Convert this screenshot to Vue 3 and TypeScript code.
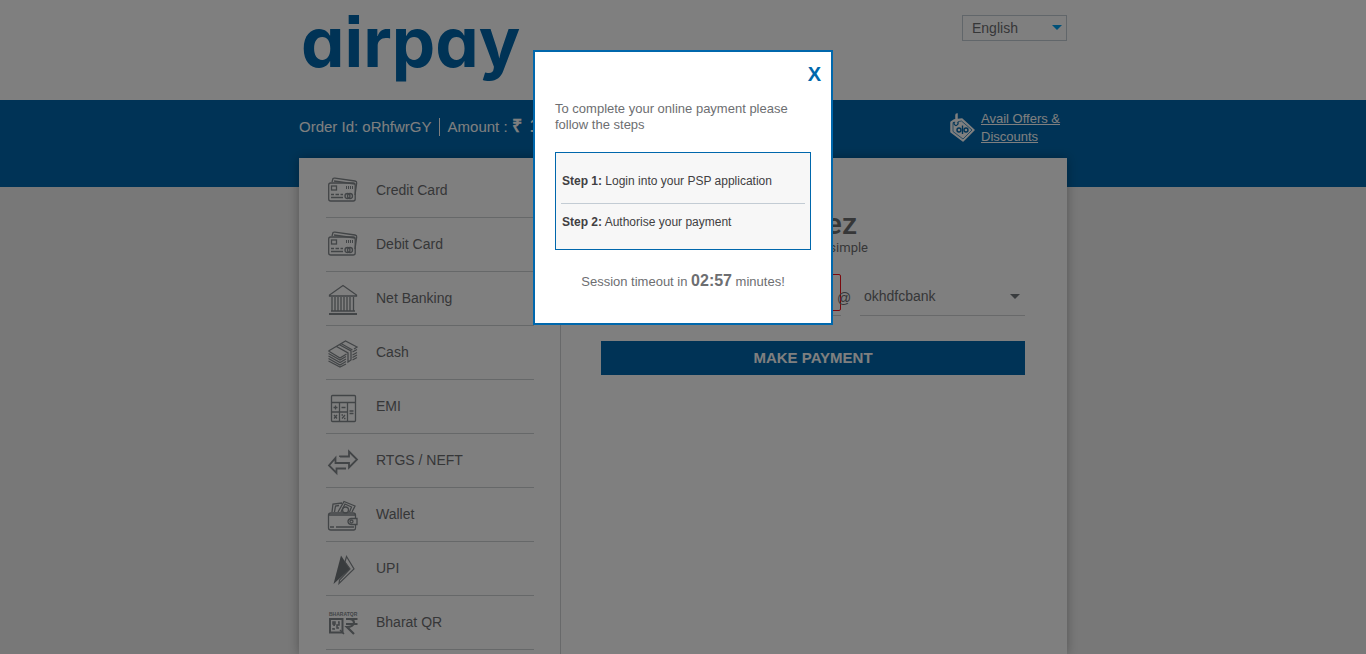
<script setup lang="ts">
import { ref } from 'vue'

interface Method {
  id: string
  label: string
}

const methods: Method[] = [
  { id: 'card', label: 'Credit Card' },
  { id: 'card', label: 'Debit Card' },
  { id: 'bank', label: 'Net Banking' },
  { id: 'cash', label: 'Cash' },
  { id: 'emi', label: 'EMI' },
  { id: 'transfer', label: 'RTGS / NEFT' },
  { id: 'wallet', label: 'Wallet' },
  { id: 'upi', label: 'UPI' },
  { id: 'qr', label: 'Bharat QR' },
]

const language = ref('English')
const handle = ref('okhdfcbank')
const vpa = ref('')
const modalOpen = ref(true)
</script>

<template>
  <div class="page">
    <header class="top wrap">
      <div class="logo">airpay</div>
      <div class="language">
        <select v-model="language" aria-label="Language">
          <option>English</option>
          <option>Hindi</option>
        </select>
        <svg class="caret" viewBox="0 0 10 5"><path d="M0 0H10L5 5Z" fill="#00a0f0" /></svg>
      </div>
    </header>

    <div class="band">
      <div class="order wrap">
        <span class="order-id">Order Id: oRhfwrGY</span>
        <span class="amount">Amount : <b class="rupee">₹</b><b>1.00</b></span>
        <div class="offers">
          <svg viewBox="0 0 26 30" fill="none">
            <path d="M2 9L5 7L13 6L25 17L14 28L2 19Z" fill="#fff" stroke="#fff" stroke-width="1.500" stroke-linejoin="round" />
            <path d="M4 9.500L12.500 8L23 17L14 26L4 18.500Z" stroke="#0067ac" stroke-width=".7" />
            <path d="M5 9V11Q7 14 9 11V9" stroke="#0067ac" stroke-width="1.300" />
            <path d="M7 11V2Q7 1 8 1V9" stroke="#fff" stroke-width="1.500" />
            <circle cx="10" cy="17" r="2" stroke="#0067ac" stroke-width="1.400" />
            <circle cx="17" cy="17" r="2" stroke="#0067ac" stroke-width="1.400" />
            <path d="M13.500 12.500V21" stroke="#0067ac" stroke-width="1.400" />
          </svg>
          <a href="#">Avail Offers &amp; Discounts</a>
        </div>
      </div>
    </div>

    <main class="panel wrap">
      <nav class="methods">
        <ul>
          <li v-for="m in methods" :key="m.label">
            <a href="#">
              <svg v-if="m.id === 'card'" class="icon" viewBox="0 0 32 32">
                <path d="M5 7L6 3.500Q6.500 3 8 3.200L28 6Q30 6.500 29.700 8L28 20" />
                <path d="M7 6L28 9" />
                <rect x="1.700" y="8" width="26.500" height="18" rx="2" />
                <rect x="4.500" y="11" width="5" height="4" />
                <path d="M19.500 11V14M21.500 11V14M23.500 11V14M25.500 11V14" stroke-width="1" />
                <path d="M4 19.500H7M8.500 19.500H12M13.500 19.500H16M4 22.500H16" />
                <circle cx="20.500" cy="21" r="2.500" /><circle cx="23" cy="21" r="2.500" />
              </svg>
              <svg v-else-if="m.id === 'bank'" class="icon" viewBox="0 0 32 32">
                <path d="M2.500 13V12L16 2.500L29.500 12V13Z" />
                <path d="M5 14V28M8 14V28M11 14V28M14 14V28M17 14V28M20 14V28M23 14V28M26.500 14V28M4 28H28" />
                <path d="M2 31H30" stroke-width="2" />
              </svg>
              <svg v-else-if="m.id === 'cash'" class="icon" viewBox="0 0 32 32">
                <path d="M1.500 14L18.500 4L30 10L27 12M1.500 14L13 21L19.500 17M9.500 9.500L21 16V25L24 23V14L12 7.500M14 6.500L25.500 13" />
                <path d="M1.500 16.500L13 23L19 19.500M1.500 19L13 25.500L19 22M1.500 21.500L13 28L19 24.500M1.500 24L13 30L19 27M25.500 15L30 12.500M25.500 18L30 15.500M25.500 20.500L30 18M25.500 23L30 20.500" />
              </svg>
              <svg v-else-if="m.id === 'emi'" class="icon" viewBox="0 0 32 32">
                <rect x="4.500" y="4.500" width="24" height="26" rx="1" />
                <path d="M4.500 11.500H28.500M12.500 11.500V30.500M20.500 11.500V30.500M4.500 21H20.500M6.500 16.500H10.500M8.500 14.500V18.500M14.500 16.500H18.500M22.500 20H26.500M22.500 22.500H26.500M7 24L10 27.500M10 24L7 27.500M15 27.500L18 24M14.500 24H16M17 27.500H18.500" />
              </svg>
              <svg v-else-if="m.id === 'transfer'" class="icon" viewBox="0 0 32 32">
                <path d="M13 12V11.500H22V6.500L30 14.500L22 22.500V18H8.500V13L2 20.500L9.500 28V23.500H19" stroke-width="1.800" />
              </svg>
              <svg v-else-if="m.id === 'wallet'" class="icon" viewBox="0 0 32 32">
                <path d="M4 14Q1.500 14 1.500 16V29Q1.500 31 4 31H27Q28.500 31 28.500 29V25M28.500 19V16Q28.500 14 26 14H4M2 16H28M3 28H7M9 28H27" />
                <path d="M5 13L6 5L15 4M7.500 13L8.500 7L12 6.500M11 13L17 2.500L28 7L25 13M14 13L18 5L24.500 8L22.500 13" />
                <circle cx="18.500" cy="11" r="3" />
                <path d="M30 19.500H24Q21 20 21 22.500Q21 25 24 25.500H30Z" />
                <circle cx="24.500" cy="22.500" r="1.500" />
              </svg>
              <svg v-else-if="m.id === 'upi'" class="icon" viewBox="0 0 32 32">
                <path d="M14 2.500L23 16L6.500 31Z" fill="#73787c" stroke="none" />
                <path d="M18 9L19.500 3.500L27 16L12 30.500L12.500 27L23 16L18 9" stroke-width="1.200" />
              </svg>
              <svg v-else class="icon" viewBox="0 0 32 32">
                <text x="2" y="9" font-size="5" font-weight="bold" fill="#858a8e" stroke="none">BHARATQR</text>
                <path d="M3 12H15.500V25.500H3Z" stroke-width="2" />
                <path d="M6 15H8V17H6ZM11 15H12V18H10V21H12M6 21V22H8M13 23L17 27M8 18H7V19" stroke-width="1.500" />
                <path d="M19 12H30.500M19 17H30.500M19 12H22Q27 12 27 16Q26 20 20 20L27 27" stroke-width="2.200" />
              </svg>
              <span>{{ m.label }}</span>
            </a>
          </li>
        </ul>
      </nav>

      <section class="pay">
        <div class="brand">
          <div class="brand-name">Tez</div>
          <div class="brand-line">Money made simple</div>
        </div>
        <form @submit.prevent>
          <div class="fields">
            <div class="vpa"><input v-model="vpa" type="text" aria-label="Payment address" /></div>
            <span class="at">@</span>
            <div class="handle">
              <select v-model="handle" aria-label="Bank handle">
                <option>okhdfcbank</option>
                <option>okaxis</option>
              </select>
              <svg class="caret" viewBox="0 0 10 5"><path d="M0 0H10L5 5Z" fill="#73787c" /></svg>
            </div>
          </div>
          <button class="submit" type="submit">MAKE PAYMENT</button>
        </form>
      </section>
    </main>

    <div v-if="modalOpen" class="overlay">
      <div class="modal" role="dialog" aria-modal="true" aria-labelledby="modal-intro">
        <button class="close" type="button" @click="modalOpen = false">X</button>
        <p id="modal-intro" class="intro">To complete your online payment please follow the steps</p>
        <ol class="steps">
          <li><b>Step 1:</b> Login into your PSP application</li>
          <li><b>Step 2:</b> Authorise your payment</li>
        </ol>
        <p class="timeout">Session timeout in <b>02:57</b> minutes!</p>
      </div>
    </div>
  </div>
</template>

<style>
body {
  margin: 0;
}
</style>

<style scoped>
* {
  box-sizing: border-box;
}
.page {
  display: flex;
  flex-direction: column;
  min-height: 100vh;
  background: #f0f0f0;
  color: #6d6e71;
  font: 14px/18px "Liberation Sans", Arial, sans-serif;
}
.page > * {
  flex-shrink: 0;
}
.wrap {
  width: 100%;
  max-width: 768px;
  margin: 0 auto;
}
.top {
  display: flex;
  justify-content: space-between;
  align-items: flex-start;
  height: 100px;
  padding: 15px 0 0 2px;
  background: #fff;
  box-shadow: 0 0 0 100vmax #fff;
  clip-path: inset(0 -100vmax);
}
.logo {
  color: #0067ac;
  font: 700 69px/54px Inter, sans-serif;
  font-feature-settings: "cv11", "ss07";
}
select {
  appearance: none;
  width: 100%;
  border: 0;
  border-radius: 0;
  background: transparent;
  color: inherit;
  font: inherit;
}
.caret {
  position: absolute;
  width: 10px;
  height: 5px;
  pointer-events: none;
}
.language {
  position: relative;
  width: 105px;
}
.language select {
  height: 26px;
  padding: 0 9px;
  border: 1px solid #c3ccd4;
}
.language .caret {
  top: 10px;
  right: 5px;
}
.band {
  height: 87px;
  background: #0067ac;
}
.order {
  display: flex;
  align-items: center;
  height: 54px;
  color: #fff;
  font-size: 15px;
}
.order-id {
  padding-right: 7px;
  border-right: 1px solid #fff;
}
.amount {
  padding-left: 8px;
}
.amount b {
  font-size: 18px;
  line-height: 16px;
}
.amount .rupee {
  padding-right: 8px;
}
.offers {
  display: flex;
  align-items: center;
  gap: 6px;
  width: 118px;
  margin-left: auto;
  padding-top: 2px;
  font-size: 13px;
}
.offers svg {
  flex: none;
  width: 26px;
  height: 30px;
}
.offers a {
  color: #fff;
}
.panel {
  display: flex;
  flex-grow: 1;
  margin-top: -29px;
  background: #fff;
  box-shadow: 0 0 10px rgba(0, 0, 0, 0.3);
}
.methods {
  flex: none;
  width: 262px;
  padding: 6px 26px 0 27px;
  border-right: 1px solid #d0d2d4;
}
ul,
ol {
  margin: 0;
  padding: 0;
  list-style: none;
}
.methods a {
  display: flex;
  align-items: center;
  gap: 17px;
  height: 54px;
  border-bottom: 1px solid #ccd0d3;
  color: inherit;
  text-decoration: none;
}
.methods span {
  padding-bottom: 2px;
}
.icon {
  width: 32px;
  height: 32px;
  margin-left: 1px;
  fill: none;
  stroke: #858a8e;
  stroke-width: 1.3;
}
.pay {
  flex: 1;
  padding: 52px 42px 0 40px;
}
.brand {
  width: 110px;
  margin: 0 auto;
  white-space: nowrap;
}
.brand-name {
  padding-right: 11px;
  font: 500 30px/28px Roboto, sans-serif;
  text-align: right;
}
.brand-line {
  display: flex;
  justify-content: flex-end;
  font: 13px/20px Roboto, sans-serif;
}
.fields {
  display: flex;
  margin-top: 16px;
}
.vpa {
  flex: 1;
  height: 42px;
  border-bottom: 1px solid #d0d2d4;
}
.vpa input {
  width: 100%;
  height: 37px;
  border: 1px solid #f5121c;
  border-radius: 2px;
  background: transparent;
  font: inherit;
}
.at {
  width: 19px;
  padding-top: 15px;
  text-indent: -4px;
}
.handle {
  position: relative;
  width: 165px;
  height: 42px;
  border-bottom: 1px solid #d0d2d4;
}
.handle select {
  height: 42px;
  padding: 2px 4px 0;
}
.handle .caret {
  top: 20px;
  right: 5px;
}
.submit {
  display: block;
  width: 100%;
  height: 34px;
  margin-top: 25px;
  border: 0;
  background: #0067ac;
  color: #fff;
  font: bold 15px/18px "Liberation Sans", Arial, sans-serif;
}
.overlay {
  position: fixed;
  inset: 0;
  background: rgba(0, 0, 0, 0.5);
}
.modal {
  position: relative;
  width: 300px;
  margin: 50px auto 0;
  padding: 49px 20px 30px;
  border: 2px solid #0067ac;
  background: #fff;
  font-size: 13px;
  line-height: 16px;
}
.close {
  position: absolute;
  top: 12px;
  right: 10px;
  padding: 0;
  border: 0;
  background: none;
  color: #0067ac;
  font: bold 20px/20px "Liberation Sans", Arial, sans-serif;
}
p {
  margin: 0;
}
.steps {
  margin: 19px 0 20px;
  padding: 10px 5px 5px;
  border: 1px solid #0067ac;
  background: #f7f7f7;
  color: #414042;
  font-size: 12px;
}
.steps li {
  padding: 10px 1px 14px;
}
.steps li + li {
  border-top: 1px solid #c3ccd4;
}
.timeout {
  text-align: center;
  line-height: 22px;
}
.timeout b {
  font-size: 16px;
}
</style>
